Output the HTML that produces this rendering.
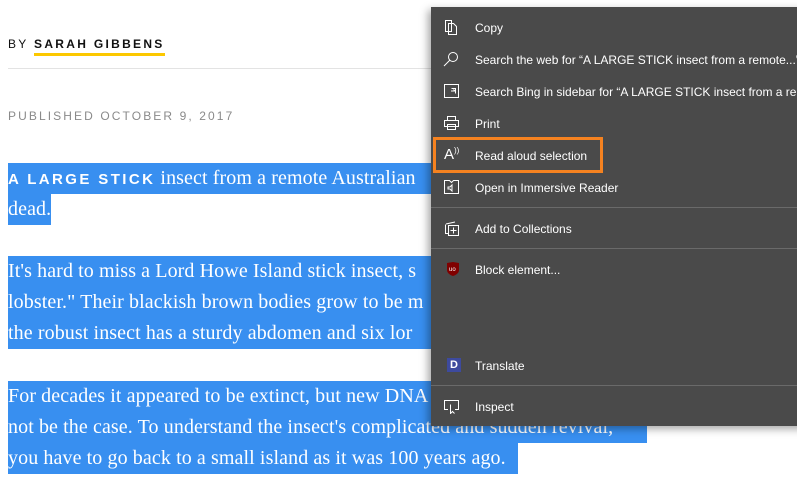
<!DOCTYPE html>
<html><head><meta charset="utf-8"><style>
body{margin:0;width:797px;height:494px;background:#fff;position:relative;overflow:hidden;font-family:"Liberation Serif",serif}
.by{position:absolute;left:8px;top:37px;font:12px "Liberation Sans",sans-serif;letter-spacing:2.3px;color:#111}
.by b{border-bottom:3px solid #fcc800;padding-bottom:2px}
.hr{position:absolute;left:8px;top:68px;width:440px;height:1px;background:#e3e3e3}
.pub{position:absolute;left:8px;top:109px;font:12px "Liberation Sans",sans-serif;letter-spacing:2.1px;color:#8a8a8a}
.p{position:absolute;left:8px;font-size:20px;letter-spacing:0.1px;line-height:31px;color:#fff;white-space:nowrap}
.p>span{background:#388ff0;display:inline-block;height:31px;vertical-align:top}
.sc{font:bold 15px "Liberation Sans",sans-serif;letter-spacing:2.4px}
.menu{position:absolute;left:431px;top:7px;width:380px;height:419px;background:#4a4a4a;box-shadow:-3px 3px 8px rgba(0,0,0,.35);font:12px "Liberation Sans",sans-serif;color:#fff}
.it{position:absolute;left:44px;white-space:nowrap}
.sep{position:absolute;left:0;width:380px;height:1px;background:#6a6a6a}
.ic{position:absolute;left:12px}
.box{position:absolute;left:2px;top:130px;width:164px;height:30px;border:3px solid #f58220}
</style></head><body>
<div class="by">BY <b>SARAH GIBBENS</b></div>
<div class="hr"></div>
<div class="pub">PUBLISHED OCTOBER 9, 2017</div>
<div class="p" style="top:163px"><span style="width:440px"><b class="sc">A LARGE STICK</b> insect from a remote Australian</span><br><span>dead.</span></div>
<div class="p" style="top:256px"><span style="width:440px">It's hard to miss a Lord Howe Island stick insect, s</span><br><span style="width:440px">lobster." Their blackish brown bodies grow to be m</span><br><span style="width:440px">the robust insect has a sturdy abdomen and six lor</span></div>
<div class="p" style="top:381px"><span style="width:440px">For decades it appeared to be extinct, but new DNA</span><br><span style="width:639px">not be the case. To understand the insect's complicated and sudden revival,</span><br><span style="width:510px">you have to go back to a small island as it was 100 years ago.</span></div>
<div class="menu">
<svg class="ic" style="top:12px" width="16" height="16" fill="none" stroke="#fff"><path d="M2.5 1.5h6v11h-6zM5.5 4.5h5l3 3v8h-8z"/></svg>
<div class="it" style="top:14px">Copy</div>
<svg class="ic" style="top:44px" width="16" height="16" fill="none" stroke="#fff"><circle cx="10" cy="6" r="4.5"/><path d="M7 9l-6 6"/></svg>
<div class="it" style="top:46px">Search the web for “A LARGE STICK insect from a remote...”</div>
<svg class="ic" style="top:76px" width="17" height="16" fill="none" stroke="#fff"><path d="M1.5 1.5h14v13h-14zM8.5 5.5h4v5M8 8h4l-1.5-1.5"/></svg>
<div class="it" style="top:78px">Search Bing in sidebar for “A LARGE STICK insect from a remo</div>
<svg class="ic" style="top:108px" width="17" height="16" fill="none" stroke="#fff"><path d="M4.5 5.5v-4h8v4M1.5 5.5h14v6h-14zM4.5 9.5h8v5h-8z"/></svg>
<div class="it" style="top:110px">Print</div>
<div class="box"></div>
<div class="ic" style="top:139px;font-size:15px;left:13px">A<sup style="font-size:8px">))</sup></div>
<div class="it" style="top:142px">Read aloud selection</div>
<svg class="ic" style="top:172px" width="17" height="16" fill="none" stroke="#fff"><path d="M1.5 1.5h5l2 2 2-2h5v13h-14z"/><path d="M5 8h2l2-2v6l-2-2H5z"/></svg>
<div class="it" style="top:174px">Open in Immersive Reader</div>
<div class="sep" style="top:200px"></div>
<svg class="ic" style="top:213px" width="17" height="17" fill="none" stroke="#fff"><path d="M3 4l9-2M5.5 5.5h10v10h-10zM10.5 7.5v6M7.5 10.5h6M2.5 4.5v9h3"/></svg>
<div class="it" style="top:215px">Add to Collections</div>
<div class="sep" style="top:241px"></div>
<svg class="ic" style="top:254px;left:15px" width="14" height="16"><path d="M1 2l6-1 6 1v7c0 3-3 5-6 6-3-1-6-3-6-6z" fill="#800000"/><text x="3" y="10" font-size="6" fill="#fff" font-family="Liberation Sans">uo</text></svg>
<div class="it" style="top:256px">Block element...</div>
<div class="ic" style="top:351px;left:16px;width:14px;height:14px;background:#3d4a9e;color:#fff;font:bold 11px 'Liberation Sans';text-align:center;line-height:14px">D</div>
<div class="it" style="top:352px">Translate</div>
<div class="sep" style="top:378px"></div>
<svg class="ic" style="top:391px" width="17" height="16" fill="none" stroke="#fff"><path d="M5 11.5H1.5v-9h14v9H12M7.5 6.5v9l2-2 2 2"/></svg>
<div class="it" style="top:393px">Inspect</div>
</div>
</body></html>
